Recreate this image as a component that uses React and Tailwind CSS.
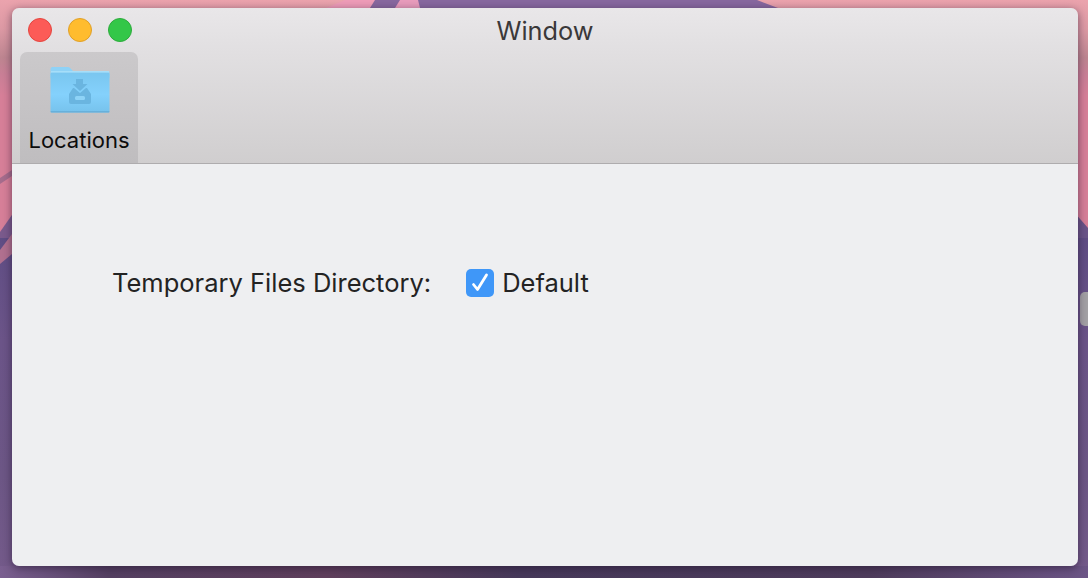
const FONT = "font-['Inter','Liberation_Sans',sans-serif]";

function Wallpaper() {
  return (
    <svg width="1088" height="578" viewBox="0 0 1088 578" className="absolute inset-0">
      <defs>
        <linearGradient id="sky" x1="0" y1="0" x2="0" y2="1">
          <stop offset="0" stopColor="#eba3ad" />
          <stop offset="0.12" stopColor="#dc99a4" />
          <stop offset="0.24" stopColor="#bd8590" />
          <stop offset="0.31" stopColor="#c97f96" />
          <stop offset="0.4" stopColor="#d67f98" />
        </linearGradient>
        <linearGradient id="hill" x1="0" y1="0" x2="0" y2="1">
          <stop offset="0" stopColor="#5f4d84" />
          <stop offset="0.3" stopColor="#6b5488" />
          <stop offset="0.7" stopColor="#6c5685" />
          <stop offset="1" stopColor="#745a8a" />
        </linearGradient>
        <linearGradient id="ground" x1="0" y1="0" x2="1" y2="0">
          <stop offset="0" stopColor="#7a5f90" />
          <stop offset="0.1" stopColor="#544062" />
          <stop offset="0.3" stopColor="#5f3f5c" />
          <stop offset="0.48" stopColor="#46395a" />
          <stop offset="0.8" stopColor="#4e3c5c" />
          <stop offset="1" stopColor="#6c5586" />
        </linearGradient>
      </defs>
      <rect width="1088" height="240" fill="url(#sky)" />
      <path d="M0 232L14 212L14 240L0 240z" fill="#7a5a8c" />
      <path d="M1074 212L1088 228L1088 240L1074 240z" fill="#6a5488" />
      <rect y="238" width="1088" height="340" fill="url(#hill)" />
      <path d="M0 178L12 170L12 176L0 184z" fill="#a56c8c" />
      <path d="M0 250L12 234L12 254L0 264z" fill="#b0708f" />
      <path d="M326 8L345 0L375 0L370 8z" fill="#ee9cb8" />
      <path d="M370 8L375 0L757 0L778 8z" fill="#87689f" />
      <path d="M395 8L400 0L418 0L420 8z" fill="#e89cbc" />
      <rect y="566" width="1088" height="12" fill="url(#ground)" />
    </svg>
  );
}

function FolderIcon() {
  return (
    <svg width="60" height="48" viewBox="0 0 60 48" className="block ml-[2px]">
      <defs>
        <linearGradient id="folderBody" x1="0" y1="0" x2="0" y2="1">
          <stop offset="0" stopColor="#7ac6ef" />
          <stop offset="0.55" stopColor="#84d1fc" />
          <stop offset="1" stopColor="#76c2ec" />
        </linearGradient>
      </defs>
      <path d="M0.500 3a2 2 0 0 1 2-2h15.500a2.500 2.500 0 0 1 1.800.8l3.200 3.200H58a1.500 1.500 0 0 1 1.500 1.500V12H0.500z" fill="#8fd2f6" />
      <path d="M0.500 8a1.500 1.500 0 0 1 1.500-1.500h56a1.500 1.500 0 0 1 1.500 1.500v37a1.500 1.500 0 0 1-1.500 1.500H2a1.500 1.500 0 0 1-1.500-1.500z" fill="url(#folderBody)" />
      <rect x="1" y="5" width="58" height="1.500" fill="#a6def9" />
      <rect x="0.500" y="45" width="59" height="1.500" rx="0.700" fill="#68b0da" />
      <path d="M26 13h7v5h4.500l-7.500 7-7.500-7H26z" fill="#6ab5e0" />
      <path d="M23 22l-4 6v8a2 2 0 0 0 2 2h18a2 2 0 0 0 2-2v-8l-4-6-1 0-6 5-6-5z" fill="#6ab5e0" />
      <rect x="25" y="30" width="10" height="4" rx="1.500" fill="#8ed3f7" />
    </svg>
  );
}

export default function App() {
  return (
    <div className={`relative w-[1088px] h-[578px] overflow-hidden ${FONT}`}>
      <Wallpaper />
      {/* desktop handle peeking out at the right edge */}
      <div className="absolute right-0 top-[292px] w-2 h-[34px] rounded-l-[5px] bg-[#a3a1a5]" />
      <div className="relative pt-2 pl-3">
        <div className="w-[1066px] h-[558px] rounded-[7px] overflow-hidden flex flex-col shadow-[0_2px_8px_rgba(30,15,40,0.55)]">
          <div className="h-[156px] shrink-0 border-b border-[#aeacae] bg-[linear-gradient(180deg,#e9e7e9_0%,#e2e0e2_25%,#d0cecf_100%)] flex flex-col">
            <div className="h-11 shrink-0 relative flex items-center justify-center">
              <div className="absolute left-4 top-[10px] flex gap-4">
                <div className="w-6 h-6 rounded-full bg-[#fc5b57] border border-[#e5453f]" />
                <div className="w-6 h-6 rounded-full bg-[#ffbc2e] border border-[#e0a028]" />
                <div className="w-6 h-6 rounded-full bg-[#33c748] border border-[#2dab3c]" />
              </div>
              <span className="text-[25.300px] leading-none text-[#3a3839] mt-[2px]">Window</span>
            </div>
            <div className="w-[118px] flex-1 ml-2 rounded-t-[7px] bg-[linear-gradient(180deg,#cbc9cb_0%,#bfbdbf_100%)] flex flex-col items-center pt-[14px]">
              <FolderIcon />
              <span className="text-[22px] leading-none text-[#0c0c0c] mt-[15px]">Locations</span>
            </div>
          </div>
          <div className="flex-1 bg-[#eeeff1] pl-[100px] pt-[105px]">
            <div className="flex items-center h-7">
              <span className="text-[25.500px] leading-none text-[#232323]">Temporary Files Directory:</span>
              <div className="w-7 h-7 ml-[35px] rounded-[5px] bg-[#3f97f8] flex items-center justify-center">
                <svg width="28" height="28" viewBox="0 0 28 28" fill="none" stroke="#ffffff" strokeWidth="2.800" strokeLinecap="round" strokeLinejoin="round">
                  <path d="M7.500 15.500L11.500 20.500L20.500 6" />
                </svg>
              </div>
              <span className="text-[25.500px] leading-none text-[#232323] ml-[8px]">Default</span>
            </div>
          </div>
        </div>
      </div>
    </div>
  );
}
